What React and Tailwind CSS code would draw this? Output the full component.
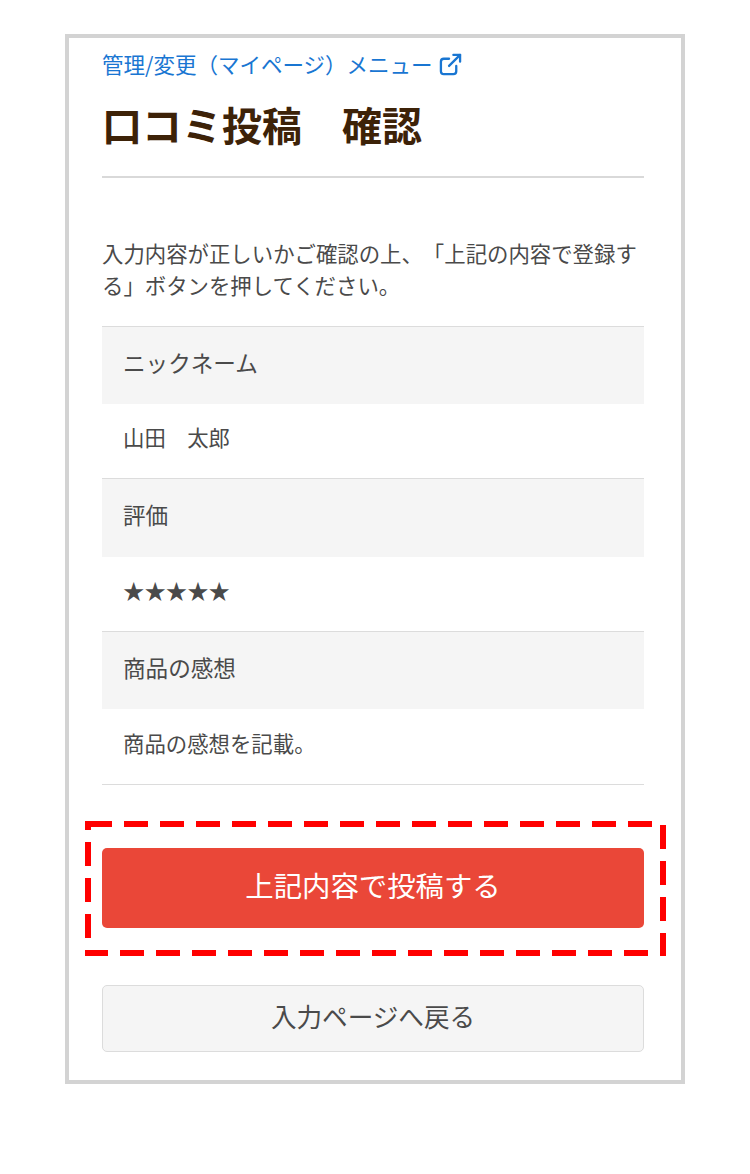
import React from 'react';

const rows = [
  { label: 'ニックネーム', value: '山田　太郎', labelH: 'h-[77px]', valueH: 'h-[74px]' },
  { label: '評価', value: '★★★★★', labelH: 'h-[78px]', valueH: 'h-[74px]' },
  { label: '商品の感想', value: '商品の感想を記載。', labelH: 'h-[77px]', valueH: 'h-[75px]' },
];

function ExternalIcon() {
  return (
    <svg width="23" height="23" viewBox="0 0 24 24" fill="none" stroke="#1976d2" strokeWidth="2.4" strokeLinecap="round" strokeLinejoin="round">
      <path d="M18 13.5V19a3 3 0 0 1-3 3H5a3 3 0 0 1-3-3V9a3 3 0 0 1 3-3h5.5" />
      <path d="M15 2h7v7" />
      <path d="M22 2 10.5 13.5" />
    </svg>
  );
}

export default function App() {
  return (
    <div className="relative h-[1174px] w-[750px] bg-white pl-[65px] pt-[34px] font-['Noto_Sans_CJK_JP',sans-serif] text-[21.4px] text-[#4a4a4a] [text-spacing-trim:space-all]">
      <div className="h-[1050px] w-[620px] border-4 border-[#d3d3d3] pl-[33px] pr-[37px]">
        <a className="mt-[7px] flex h-[38px] items-center gap-[6px] text-[21.5px] text-[#1976d2]">
          管理/変更（マイページ）メニュー
          <ExternalIcon />
        </a>
        <h1 className="mt-[13px] h-[82px] border-b-2 border-[#d9d9d9] text-[40px] leading-[56px] font-bold text-[#3d2208]">
          口コミ投稿　確認
        </h1>

        <p className="mt-[59px] text-[21.4px] leading-[32px]">
          入力内容が正しいかご確認の上、「上記の内容で登録する」ボタンを押してください。
        </p>

        <dl className="mt-[25px] border-t border-[#dcdcdc]">
          {rows.map(r => (
            <div key={r.label} className="border-b border-[#dcdcdc]">
              <dt className={`flex items-center bg-[#f5f5f5] px-[21px] pb-[6px] text-[22.6px] ${r.labelH}`}>{r.label}</dt>
              <dd className={`flex items-center px-[21px] pb-[7px] ${r.valueH}`}>{r.value}</dd>
            </div>
          ))}
        </dl>

        <button className="mt-[63px] flex h-[80px] w-full items-center justify-center rounded-[5px] bg-[#ea4738] pb-[5px] text-[28.4px] text-white">
          上記内容で投稿する
        </button>
        <button className="mt-[57px] flex h-[67px] w-full items-center justify-center rounded-[5px] border border-[#dcdcdc] bg-[#f5f5f5] pb-[4px] text-[25.6px] text-[#4a4a4a]">
          入力ページへ戻る
        </button>
      </div>

      {/* annotation frame, dash phase differs per side */}
      <svg className="absolute left-[85px] top-[821px]" width="582" height="135" fill="none" stroke="#ff0000" strokeWidth="6">
        <path d="M0 3H3" />
        <path d="M3 3H568" strokeDasharray="24 12" />
        <path d="M578 4V136" strokeDasharray="24 12" />
        <path d="M0 132H564" strokeDasharray="24 12" strokeDashoffset="1" />
        <path d="M3 135V0" strokeDasharray="24 12" strokeDashoffset="18" />
      </svg>
    </div>
  );
}
